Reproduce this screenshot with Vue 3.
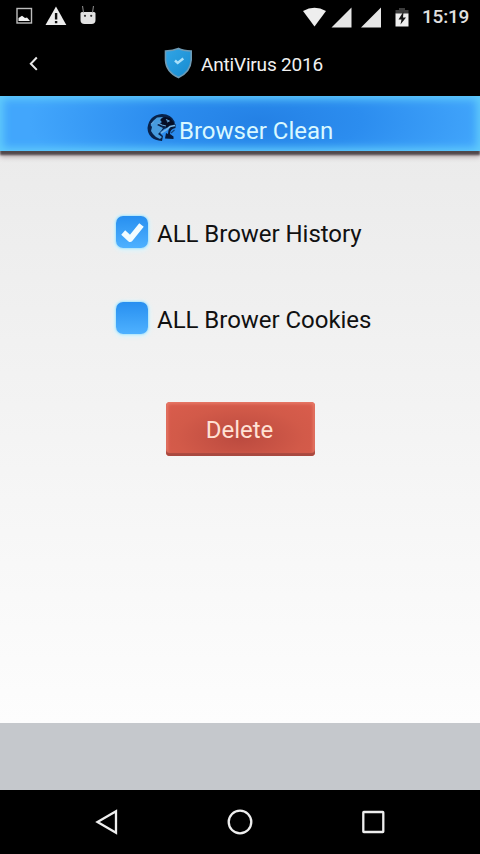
<script setup>
import { ref } from 'vue'

const options = ref([
  { label: 'ALL Brower History', checked: true },
  { label: 'ALL Brower Cookies', checked: false },
])
</script>

<template>
  <div class="screen">
    <div class="status">
      <svg class="notices" width="84" height="22" viewBox="0 0 84 22">
        <rect x="1" y="3.500" width="14.500" height="14.500" fill="none" stroke="#bdbdbd" stroke-width="1.400" />
        <path d="M2.500 16V13L6 10.800L9 13L11 12.500L14 16Z" fill="#f1f1f1" />
        <path d="M40 1.500L50.300 20H29.500Z" fill="#ececec" />
        <path d="M38.900 8h2.400v6.500h-2.400zM38.900 16h2.400v2.200h-2.400z" fill="#111" />
        <path d="M64.500 8.500Q64.500 7 66 7H78Q79.500 7 79.500 8.500V15Q79.500 19 75.500 19H68.500Q64.500 19 64.500 15Z" fill="#e2e2e2" />
        <path d="M67.500 7.500L66.500 1M76.500 7.500L77.500 1" stroke="#858585" stroke-width="1.100" />
        <circle cx="69" cy="10.800" r="1.100" fill="#333" /><circle cx="75.200" cy="10.800" r="1.100" fill="#333" />
      </svg>
      <div class="signals">
        <svg width="108" height="22" viewBox="0 0 108 22">
          <path d="M0 5Q11.500 -1.500 23 5L11.500 20.500Z" fill="#eee" />
          <path d="M48.500 1.500V21.500H28.500ZM78 1.500V21.500H58Z" fill="#e6e6e6" />
          <path d="M92.500 4H96V2H102V4H105.500V8H92.500Z" fill="#3c3c3c" />
          <path d="M92.500 7.500H105.500V20.500H92.500Z" fill="#eee" />
          <path d="M100.500 5.500L95.500 13.500H98.500L97.500 18.500L103 11.500H100Z" fill="#151515" />
        </svg>
        <span class="clock">15:19</span>
      </div>
    </div>

    <header class="header">
      <svg class="back" width="12" height="16" viewBox="0 0 12 16">
        <path d="M8.800 1.500L2.800 7.700L8.800 13.900" fill="none" stroke="#e8e8e8" stroke-width="2" />
      </svg>
      <svg class="shield" width="28" height="32" viewBox="0 0 28 32">
        <defs>
          <linearGradient id="shieldFill" x1="0" y1="0" x2="1" y2="1">
            <stop offset="0" stop-color="#32a5e6" /><stop offset="1" stop-color="#168bd0" />
          </linearGradient>
        </defs>
        <path d="M14.500 1.500Q19 3.800 27.200 4V13Q26.500 25 14.500 30.500Q2 25 1.500 13V4Q9 3.800 14.500 1.500Z" fill="url(#shieldFill)" stroke="#6f9bb5" stroke-width="1.600" />
        <path d="M11 13.500L13.700 16L19.300 11.500" fill="none" stroke="#a9e0fa" stroke-width="2.400" />
      </svg>
      <h1 class="title">AntiVirus 2016</h1>
    </header>

    <div class="banner">
      <svg class="globe" width="30" height="30" viewBox="0 0 30 30">
        <path d="M15 1Q24 1 27.500 8.500L28 12L23 14L17 16L13 20L16 23L15 28Q1 27 .500 15Q2 2 15 1Z" fill="#08224a" />
        <path d="M6 8L10 4.500L16 4L13 7L15 9L10 12L16 15L14 18L11 21L15 24L13 26Q8 24 6 21L4 18L5 14L3.500 12Z" fill="#479bdd" />
        <path d="M14 6L18 4L23 5L27 10L26 12L20 14L16 13L12 12L15 10Z" fill="#050d25" />
        <path d="M19 6.500L22 8L20 9M11 10L15 12L19 13M4 11L7 9" fill="none" stroke="#64a5da" stroke-width="1.100" />
        <path d="M28.500 11L28.500 15Q23 16 23 21L26.500 23.500V26L18 25.500L19 20L21 21Q21 15 25 13Z" fill="#071a3b" />
        <path d="M14 20L19 17L23 13.500L28 12.500" fill="none" stroke="#74b4e6" stroke-width="1.600" />
        <path d="M24 20L27.500 17" stroke="#164679" stroke-width="1.200" />
      </svg>
      <span class="banner-text">Browser Clean</span>
    </div>

    <main class="content">
      <div class="options">
        <label v-for="option in options" :key="option.label" class="option" @click="option.checked = !option.checked">
          <span class="box">
            <svg v-if="option.checked" width="32" height="32" viewBox="0 0 32 32">
              <path d="M7.200 16.500L14.200 23L25.500 9" fill="none" stroke="#f2fcff" stroke-width="5.800" stroke-linejoin="round" />
            </svg>
          </span>
          <span class="label">{{ option.label }}</span>
        </label>
      </div>
      <button class="delete">Delete</button>
    </main>

    <div class="ad"></div>

    <nav class="nav">
      <svg width="26" height="28" viewBox="0 0 26 28"><path d="M22 3.300V24.700L3.500 14Z" fill="none" stroke="#eee" stroke-width="2.300" /></svg>
      <svg width="28" height="28" viewBox="0 0 28 28"><circle cx="14" cy="14" r="11.300" fill="none" stroke="#eee" stroke-width="2.300" /></svg>
      <svg width="26" height="28" viewBox="0 0 26 28"><rect x="3.300" y="4" width="20" height="20" rx=".5" fill="none" stroke="#eee" stroke-width="2.300" /></svg>
    </nav>
  </div>
</template>

<style>
body { margin: 0; background: #000; }
</style>

<style scoped>
.screen {
  width: 480px;
  height: 854px;
  display: flex;
  flex-direction: column;
  overflow: hidden;
  background: #000;
  font-family: Roboto, "Liberation Sans", sans-serif;
}
svg { display: block; flex: none; }
.status {
  height: 34px;
  flex: none;
  display: flex;
  justify-content: space-between;
  align-items: flex-start;
  box-sizing: border-box;
  padding: 5px 10px 0 16px;
}
.signals { display: flex; align-items: center; gap: 11px; }
.clock { width: 48px; color: #e0e0e0; font-size: 19px; font-weight: 500; letter-spacing: -0.2px; line-height: 24px; white-space: nowrap; }
.header { height: 62px; flex: none; display: flex; box-sizing: border-box; padding: 13px 0 0 28px; }
.back { margin-top: 9px; }
.shield { margin-left: 124px; }
.title { margin: 5px 0 0 9px; color: #f1f1f1; font-size: 19px; font-weight: 400; letter-spacing: -0.18px; line-height: 26px; white-space: nowrap; }
.banner {
  position: relative;
  z-index: 1;
  height: 55px;
  flex: none;
  display: flex;
  box-sizing: border-box;
  padding: 17px 0 0 147px;
  background: radial-gradient(ellipse 230px 75px at 54% 45%, #2481e5 0%, #2c8def 45%, #42a6fc 100%);
  box-shadow: inset 0 0 8px 3px #62cdfb, 0 4px 2px #51484b, 0 6px 5px #b9adb0;
}
.banner-text { margin: 3px 0 0 2px; color: #d9f8ff; font-size: 24px; line-height: 30px; white-space: nowrap; }
.content {
  flex: 1;
  display: flex;
  flex-direction: column;
  box-sizing: border-box;
  padding-top: 65px;
  background: linear-gradient(#ebebeb, #f4f4f4 50%, #fdfdfd);
}
.options { display: flex; flex-direction: column; gap: 54px; padding-left: 116px; }
.option { display: flex; height: 32px; }
.box {
  width: 32px;
  height: 32px;
  border-radius: 7px;
  background: linear-gradient(#278ff0, #4eb1ff);
  box-shadow: 0 0 2px 1px #ace4fb, 0 1px 4px 2px #daf5fd;
}
.label { margin: 3px 0 0 9px; color: #111; font-size: 24px; letter-spacing: -0.03px; line-height: 30px; white-space: nowrap; }
.delete {
  width: 149px;
  height: 54px;
  margin: 68px 0 0 166px;
  padding: 1px 2px 0 0;
  border: 0;
  border-radius: 4px;
  background: radial-gradient(ellipse at 50% 65%, #bb4a3f, #d25a49 60%, #da5d4d);
  box-shadow: inset 0 -3px 1px #a84940, inset 0 0 3px 2px #e77867;
  color: #ffe1d4;
  font: 24px/30px Roboto, "Liberation Sans", sans-serif;
}
.ad { height: 67px; flex: none; background: #c5c8cc; }
.nav {
  height: 64px;
  flex: none;
  display: flex;
  justify-content: space-between;
  align-items: center;
  box-sizing: border-box;
  padding: 0 94px;
}
</style>
